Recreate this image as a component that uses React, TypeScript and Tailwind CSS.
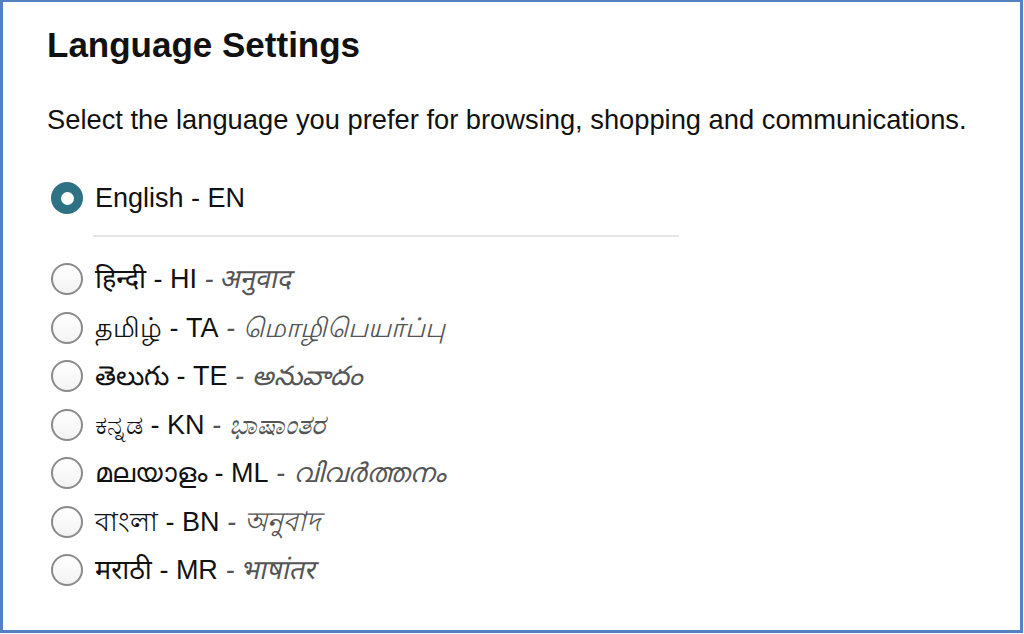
import React, { useState } from "react";

type Lang = {
  code: string;
  native: string;
  translation?: string;
  slant?: boolean;
};

const LANGS: Lang[] = [
  { code: "HI", native: "हिन्दी", translation: "अनुवाद", slant: true },
  { code: "TA", native: "தமிழ்", translation: "மொழிபெயர்ப்பு" },
  { code: "TE", native: "తెలుగు", translation: "అనువాదం" },
  { code: "KN", native: "ಕನ್ನಡ", translation: "ಭಾಷಾಂತರ" },
  { code: "ML", native: "മലയാളം", translation: "വിവർത്തനം" },
  { code: "BN", native: "বাংলা", translation: "অনুবাদ" },
  { code: "MR", native: "मराठी", translation: "भाषांतर", slant: true },
];

function Radio({ checked }: { checked: boolean }) {
  if (checked) {
    return (
      <span className="flex h-[32px] w-[32px] shrink-0 items-center justify-center rounded-full bg-[#2f7185]">
        <span className="h-[13px] w-[13px] rounded-full bg-white" />
      </span>
    );
  }
  return (
    <span className="h-[32px] w-[32px] shrink-0 rounded-full border-2 border-[#8a8a8a] bg-gradient-to-b from-white to-[#f3f3f3]" />
  );
}

export default function App() {
  const [selected, setSelected] = useState("EN");

  return (
    <div
      className="h-[633px] w-[1023px] overflow-hidden border-t-2 border-r-[3px] border-b-[3px] border-l-[3px] border-[#5282c2] bg-white text-[#111]"
      style={{ fontFamily: '"Liberation Sans", Arial, "Noto Sans", sans-serif' }}
    >
      <div className="pl-[44px] pt-[23px]">
        <h1 className="text-[35px] leading-[40px] font-bold">Language Settings</h1>

        <p className="mt-[39px] text-[27.3px] leading-[32px]">
          Select the language you prefer for browsing, shopping and communications.
        </p>

        {/* default language */}
        <label
          className="mt-[42px] flex h-[40px] cursor-pointer items-center gap-[12px] pl-[4px]"
          onClick={() => setSelected("EN")}
        >
          <Radio checked={selected === "EN"} />
          <span className="text-[27px]">English - EN</span>
        </label>

        <div className="mt-[17px] ml-[46px] h-[2px] w-[586px] bg-[#e6e6e6]" />

        <div className="mt-[18px] flex flex-col">
          {LANGS.map((l) => (
            <label
              key={l.code}
              className="flex h-[48.5px] cursor-pointer items-center gap-[12px] pl-[4px]"
              onClick={() => setSelected(l.code)}
            >
              <Radio checked={selected === l.code} />
              <span className="text-[27px] whitespace-nowrap">
                {l.native} - {l.code}
                {l.translation && (
                  <span className="italic text-[#555]">
                    {" - "}
                    <span className={l.slant ? "inline-block -skew-x-12" : ""}>
                      {l.translation}
                    </span>
                  </span>
                )}
              </span>
            </label>
          ))}
        </div>
      </div>
    </div>
  );
}
